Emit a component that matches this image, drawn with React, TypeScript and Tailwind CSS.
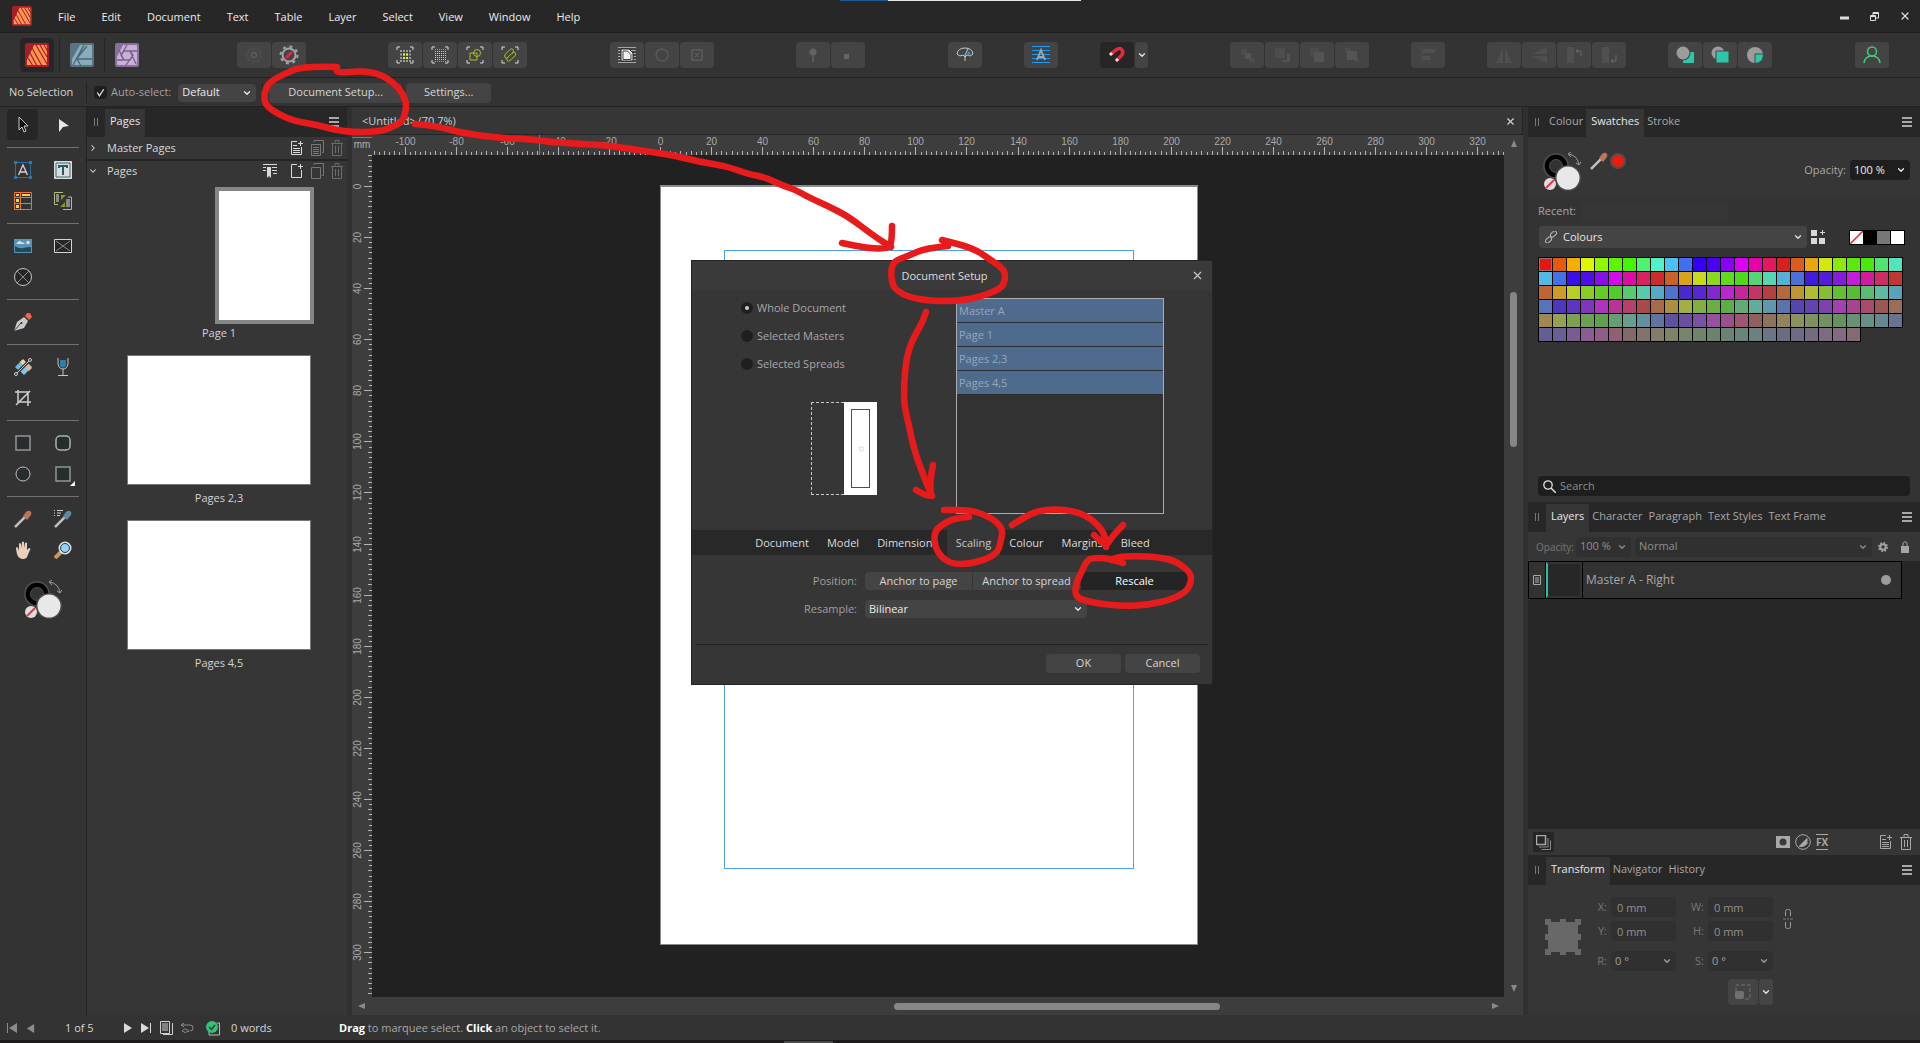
import type { ReactNode } from "react";
import { ChevronDown, ChevronRight, X } from "lucide-react";

const MENUS = ["File", "Edit", "Document", "Text", "Table", "Layer", "Select", "View", "Window", "Help"];
const DIALOG_TABS = ["Document", "Model", "Dimensions", "Scaling", "Colour", "Margins", "Bleed"];
const SCOPES = ["Whole Document", "Selected Masters", "Selected Spreads"];
const SPREADS = ["Master A", "Page 1", "Pages 2,3", "Pages 4,5"];
const MM = 2.554;

type Point = [number, number];

// vivid hues fade to their greyed versions over nine cycles
const VIVID = [
  "e21814", "e55a12", "f7ae00", "ddf700", "8ff700", "5af700", "44f700", "4cf36f", "50f2c7",
  "4cc1f2", "4070f2", "3300f7", "4a00f7", "8b00f7", "dd00f7", "e800aa", "e5185e",
];
const MUTED = [
  "836a6a", "81756b", "817d6a", "7f836a", "7a836b", "72836b", "6b836c", "6a8374", "6a837d",
  "6a8083", "6b7583", "6b6d83", "706b83", "766a83", "7d6a83", "836a80", "836a75",
];

function mix(a: string, b: string, t: number) {
  const channel = (hex: string, i: number) => parseInt(hex.slice(i * 2, i * 2 + 2), 16);
  const rgb = [0, 1, 2].map((i) => Math.round(channel(a, i) * (1 - t) + channel(b, i) * t));
  return `rgb(${rgb.join(",")})`;
}

const SWATCHES = Array.from({ length: 153 }, (_, i) => mix(VIVID[i % 17], MUTED[i % 17], Math.floor(i / 17) / 8));

const MARKS: Point[][] = [
  [[337, 67], [304, 66], [286, 73], [269, 82], [264, 93], [265, 105], [278, 114], [294, 121], [318, 125], [343, 132], [380, 132], [394, 126], [402, 122], [407, 108], [404, 95], [394, 83], [380, 74], [363, 71], [336, 73], [337, 67]],
  [[415, 124], [437, 126], [462, 133], [498, 138], [528, 139], [551, 142], [580, 144], [604, 145], [652, 152], [677, 156], [700, 162], [726, 166], [748, 174], [764, 177], [784, 186], [796, 190], [808, 197], [830, 207], [849, 217], [874, 236], [891, 247]],
  [[892, 226], [892, 240], [889, 249], [866, 248], [842, 243]],
  [[948, 246], [926, 248], [908, 256], [894, 261], [891, 270], [892, 283], [896, 290], [908, 297], [930, 301], [958, 301], [980, 297], [1000, 289], [1005, 282], [1005, 270], [991, 260], [973, 248], [942, 240]],
  [[926, 312], [923, 322], [912, 340], [906, 360], [904, 385], [904, 405], [909, 425], [914, 450], [926, 482], [932, 496]],
  [[933, 465], [930, 480], [931, 496], [925, 495], [916, 490]],
  [[969, 517], [955, 518], [941, 525], [934, 533], [935, 547], [942, 558], [953, 564], [969, 564], [987, 559], [998, 552], [1001, 540], [1003, 530], [996, 521], [983, 514], [969, 510], [944, 510]],
  [[1012, 525], [1023, 518], [1037, 511], [1055, 509], [1073, 511], [1087, 516], [1098, 525], [1105, 535], [1106, 547]],
  [[1094, 535], [1106, 547], [1111, 538], [1123, 525]],
  [[1123, 563], [1108, 558], [1091, 558], [1086, 562], [1082, 571], [1076, 583], [1075, 595], [1082, 600], [1101, 604], [1123, 606], [1148, 605], [1173, 599], [1187, 591], [1191, 582], [1191, 573], [1176, 561], [1158, 557], [1134, 556], [1118, 557], [1112, 560]],
];

function smooth(points: Point[]) {
  let d = `M${points[0]}`;
  for (let i = 1; i < points.length - 1; i++) {
    const [x, y] = points[i];
    const [nx, ny] = points[i + 1];
    d += ` Q${x},${y} ${(x + nx) / 2},${(y + ny) / 2}`;
  }
  return `${d} L${points[points.length - 1]}`;
}

function Annotations() {
  return (
    <svg width="1920" height="1043" className="pointer-events-none absolute left-0 top-0 z-20" aria-hidden="true">
      {MARKS.map((mark, i) => (
        <path key={i} d={smooth(mark)} fill="none" stroke="#e71b1b" strokeWidth="6.5" strokeLinecap="round" strokeLinejoin="round" />
      ))}
    </svg>
  );
}

function Icon({ children, size = 18, box = 18 }: { children: ReactNode; size?: number; box?: number }) {
  return (
    <svg width={size} height={size} viewBox={`0 0 ${box} ${box}`} fill="none" className="shrink-0" aria-hidden="true">
      {children}
    </svg>
  );
}

function PublisherLogo({ size }: { size: number }) {
  return (
    <Icon size={size} box={24}>
      <rect width="24" height="24" rx="2" fill="#a51e2c" />
      <path d="M9 2h12q1 0 1 1v18q0 1-1 1H2v-5z" fill="#ff9550" />
      <path d="M5 10l7 13M7 5l10 18M11 2l11 19M15 2l7 12M19 2l4 7M3 15l5 8" stroke="#a51e2c" strokeWidth="1.2" />
    </Icon>
  );
}

function DesignerLogo() {
  return (
    <Icon size={24} box={24}>
      <rect width="24" height="24" rx="2" fill="#5a7485" />
      <path d="M10 2h11q1 0 1 1v18q0 1-1 1H2v-6z" fill="#88aebb" />
      <path d="M14 2L7 16h15M7 16l4 7M14 2L3 22M8 14l9-11" stroke="#4c6677" strokeWidth="1.3" />
    </Icon>
  );
}

function PhotoLogo() {
  return (
    <Icon size={24} box={24}>
      <rect width="24" height="24" rx="2" fill="#85719a" />
      <path d="M8 2h13q1 0 1 1v18q0 1-1 1H3q-1 0-1-1v-7z" fill="#cdaed6" />
      <path d="M9 8h13M15 8l6 13M18 12l-7 10M15 17H2M9 17L4 7M6 12l6-10M9 8h6l3 4-3 5H9l-3-5z" stroke="#75618c" strokeWidth="1.3" />
    </Icon>
  );
}

function GearIcon({ dim }: { dim?: boolean }) {
  return (
    <Icon size={20} box={20}>
      <circle cx="10" cy="10" r="6.5" stroke={dim ? "#4c4c4c" : "#a4a4a4"} strokeWidth="2" />
      <circle cx="10" cy="10" r="8.5" stroke={dim ? "#4a4a4a" : "#a4a4a4"} strokeWidth="2" strokeDasharray="3 3.7" />
      {dim ? <circle cx="10" cy="10" r="2.5" stroke="#585858" strokeWidth="2" /> : <path d="M7 13l6-6" stroke="#e8263f" strokeWidth="2.5" />}
    </Icon>
  );
}

function Corners() {
  return <path d="M1 4V1h3M14 1h3v3M17 14v3h-3M4 17H1v-3" stroke="#dcdcdc" />;
}

function ToolButton({ label, children, dark }: { label: string; children: ReactNode; dark?: boolean }) {
  return (
    <button
      aria-label={label}
      className={`flex h-[26px] w-[34px] shrink-0 items-center justify-center rounded-sm ${dark ? "bg-[#262626]" : "bg-[#444444]"}`}
    >
      {children}
    </button>
  );
}

function Caret() {
  return <ChevronDown size={10} strokeWidth={3} className="pointer-events-none absolute right-1 top-1/2 -translate-y-1/2" />;
}

function Select({ label, value, className }: { label: string; value: string; className: string }) {
  return (
    <span className={`relative inline-flex shrink-0 items-center rounded-sm ${className}`}>
      <select aria-label={label} className="h-full w-full appearance-none bg-transparent pl-1 outline-none">
        <option>{value}</option>
      </select>
      <Caret />
    </span>
  );
}

function Toolbar() {
  return (
    <div className="flex h-[45px] items-center border-b border-[#222222] bg-[#333333]">
      <div className="flex items-center pl-5">
        <button aria-label="Publisher persona" className="flex h-[34px] w-[34px] items-center justify-center rounded bg-[#262626]">
          <PublisherLogo size={24} />
        </button>
        <button aria-label="Designer persona" className="ml-[5px] flex h-[34px] w-[45px] items-center justify-center border-l border-[#262626]">
          <DesignerLogo />
        </button>
        <button aria-label="Photo persona" className="flex h-[34px] w-[45px] items-center justify-center border-l border-[#262626]">
          <PhotoLogo />
        </button>
      </div>
      <div className="ml-[88px] flex gap-px">
        <ToolButton label="Preferences"><GearIcon dim /></ToolButton>
        <ToolButton label="Preflight"><GearIcon /></ToolButton>
      </div>
      <div className="ml-[82px] flex gap-px">
        <ToolButton label="Baseline grid">
          <Icon>
            <Corners />
            <path d="M4 5h11M4 8.500h11M4 12h11M4 15h11" stroke="#9a9a9a" strokeWidth="2" strokeDasharray="2 1" />
            <path d="M7 8.500h5M7 12h5" stroke="#e6f23c" strokeWidth="2" strokeDasharray="2 1" />
          </Icon>
        </ToolButton>
        <ToolButton label="Grid">
          <Icon>
            <Corners />
            <path d="M4 3.500h11M4 15.500h11" stroke="#9a9a9a" strokeDasharray="1 1" />
            <path d="M4 5.500h11M4 7.500h11M4 9.500h11M4 11.500h11M4 13.500h11" stroke="#d9e23c" strokeDasharray="1 1" />
          </Icon>
        </ToolButton>
        <ToolButton label="Snap to shapes">
          <Icon>
            <Corners />
            <path d="M4 7h7v7H4z" stroke="#aebb2b" />
            <circle cx="11" cy="7" r="3.500" stroke="#aebb2b" />
          </Icon>
        </ToolButton>
        <ToolButton label="Snap to curves">
          <Icon>
            <Corners />
            <path d="M4.500 12q-2-2 0-4L9 3.500q2-1.500 3 0t0 3L7 11M6 14.500q1.500 1.500 3 0L14 10q1.500-2 0-3.500M4.500 12q1.500 1 2.500-1M6 14.500q-1-1.500 1-3.500M14 6.500q-1.500-1-3 1" stroke="#aebb2b" />
          </Icon>
        </ToolButton>
      </div>
      <div className="ml-[83px] flex gap-px">
        <ToolButton label="Wrap">
          <Icon>
            <path d="M0 1.500h18M0 4.500h18M0 7.500h18M0 10.500h18M0 13.500h18M0 16.500h18" stroke="#a5a5a5" />
            <path d="M3 3h8l4 4v8H3z" fill="#efefef" stroke="#222" />
            <path d="M5 5h4.500l3.500 3.500V13.500H5z" stroke="#444" />
          </Icon>
        </ToolButton>
        <ToolButton label="Wrap outline"><Icon><circle cx="9" cy="9" r="6" stroke="#585858" strokeWidth="1.500" /></Icon></ToolButton>
        <ToolButton label="Wrap frame"><Icon><path d="M4 4h10v10H4zM7 7l4 4M11 7l-4 4" stroke="#5c5c5c" strokeWidth="1.500" /></Icon></ToolButton>
      </div>
      <div className="ml-[82px] flex gap-px">
        <ToolButton label="Pin"><Icon><circle cx="9" cy="6" r="3.500" fill="#626262" /><path d="M9 8v8" stroke="#626262" strokeWidth="1.500" /></Icon></ToolButton>
        <ToolButton label="Anchor"><Icon><path d="M5 8h5v5H5z" fill="#666" /></Icon></ToolButton>
      </div>
      <div className="ml-[83px] flex">
        <ToolButton label="Preview">
          <Icon>
            <path d="M1 8q1-6 8-6 7 0 8 6l-3 2-3-1-2 2-2-2-3 1zM9 15V9l3-6" stroke="#c9c9c9" />
            <path d="M12 5l3 2-3 3-1-1z" fill="#2a8fdd" />
          </Icon>
        </ToolButton>
      </div>
      <div className="ml-[42px] flex">
        <ToolButton label="Baseline">
          <Icon>
            <path d="M0 .5h18M0 4.500h18M0 8.500h18M0 12.500h18M0 16.500h18" stroke="#1d9bf0" />
            <path d="M5 14L9 4l4 10M7 11h4" stroke="#a5a5a5" strokeWidth="1.800" />
          </Icon>
        </ToolButton>
      </div>
      <div className="ml-[42px] flex gap-px">
        <ToolButton label="Snapping" dark>
          <Icon>
            <path d="M3 8l5-4q4-3 6 0t-1 6l-4 4" stroke="#e52a3d" strokeWidth="3.500" />
            <path d="M2 9l2-2M8 15l2-2" stroke="#eee" strokeWidth="3" />
          </Icon>
        </ToolButton>
        <button aria-label="Snapping options" className="flex h-[26px] w-[13px] items-center justify-center rounded-sm bg-[#444444] text-gray-200">
          <ChevronDown size={10} strokeWidth={3} />
        </button>
      </div>
      <div className="ml-[82px] flex gap-px">
        <ToolButton label="Move to back"><Icon><path d="M3 3h6v6H3zM11 12h5v4h-5z" fill="#4d4d4d" /><path d="M7 7h6v6H7z" fill="#545454" /></Icon></ToolButton>
        <ToolButton label="Move back"><Icon><path d="M2 2h10v10H2z" fill="#4d4d4d" /><path d="M14 8h3v8H9v-2h5z" fill="#545454" /></Icon></ToolButton>
        <ToolButton label="Move forward"><Icon><path d="M2 2h9v9H2z" fill="#4b4b4b" /><path d="M6 6h10v10H6z" fill="#545454" /></Icon></ToolButton>
        <ToolButton label="Move to front"><Icon><path d="M2 2h5v5H2zM11 12h5v4h-5z" fill="#4b4b4b" /><path d="M4 5h10v9H4z" fill="#545454" /></Icon></ToolButton>
      </div>
      <div className="ml-[42px] flex">
        <ToolButton label="Alignment"><Icon><path d="M3 1v16" stroke="#505050" /><path d="M4 5h12M4 12h7" stroke="#505050" strokeWidth="4" /></Icon></ToolButton>
      </div>
      <div className="ml-[42px] flex gap-px">
        <ToolButton label="Flip horizontal"><Icon><path d="M8 1v16H1zM10 1v16h7z" fill="#4f4f4f" /></Icon></ToolButton>
        <ToolButton label="Flip vertical"><Icon><path d="M17 1v7H2zM17 17v-7H2z" fill="#4f4f4f" /></Icon></ToolButton>
        <ToolButton label="Rotate left"><Icon><path d="M2 1h7v16H2z" fill="#505050" /><path d="M16 10V5h-5M13 3l-2 2 2 2" stroke="#686868" /></Icon></ToolButton>
        <ToolButton label="Rotate right"><Icon><path d="M2 1h7v16H2z" fill="#505050" /><path d="M16 9v6h-5M13 13l-2 2 2 2" stroke="#686868" /></Icon></ToolButton>
      </div>
      <div className="ml-[42px] flex gap-px">
        <ToolButton label="Insert behind"><Icon><path d="M7 6h11v11H7z" fill="#2bc8a9" /><circle cx="7" cy="7" r="7.500" fill="#444" /><circle cx="7" cy="7" r="6.500" fill="#9c9c9c" /></Icon></ToolButton>
        <ToolButton label="Insert on top"><Icon><circle cx="7" cy="7" r="6.500" fill="#9c9c9c" /><path d="M5 5h13v12H5z" fill="#2bc8a9" stroke="#444" /></Icon></ToolButton>
        <ToolButton label="Insert inside"><Icon><circle cx="9" cy="9" r="8" fill="#9c9c9c" /><path d="M9 8h8.500q0 9-8.500 9.500z" fill="#2bc8a9" stroke="#444" /></Icon></ToolButton>
      </div>
      <div className="ml-auto mr-[31px] flex">
        <ToolButton label="Account"><Icon><circle cx="9" cy="5.500" r="4.500" stroke="#43c97a" strokeWidth="1.500" /><path d="M1 17q1-7 8-7 7 0 8 7" stroke="#43c97a" strokeWidth="1.500" /></Icon></ToolButton>
      </div>
    </div>
  );
}

function ContextBar() {
  return (
    <div className="flex h-[29px] items-center border-b border-[#222222] bg-[#333333] pt-px">
      <span className="w-[86px] pl-[9px] text-[#d6d6d6]">No Selection</span>
      <label className="flex h-5 items-center gap-1 border-l border-[#242424] pl-[7px] text-[#a2a2a2]">
        <span className="relative flex">
          <input type="checkbox" defaultChecked className="peer h-[13px] w-[13px] appearance-none rounded-sm bg-[#1f1f1f]" />
          <svg viewBox="0 0 12 12" className="pointer-events-none absolute inset-0 hidden peer-checked:block" fill="none">
            <path d="M3 6l2 3 4-6" stroke="#e3e3e3" strokeWidth="1.200" />
          </svg>
        </span>
        Auto-select:
      </label>
      <Select label="Auto-select" value="Default" className="ml-[7px] h-[18px] w-[78px] bg-[#444444] text-[#ececec]" />
      <div className="ml-[6px] flex h-5 gap-1 border-l border-[#242424] pl-[6px]">
        <button className="w-[133px] rounded-sm bg-[#444444] text-center text-[#d6d6d6]">Document Setup...</button>
        <button className="w-[85px] rounded-sm bg-[#444444] text-center text-[#d6d6d6]">Settings...</button>
      </div>
    </div>
  );
}

const dropper = (tip: string) => (
  <>
    <path d="M2 16L11 7" stroke="#2a2a2a" strokeWidth="4" />
    <path d="M1 17L11 7" stroke="#bdbdbd" strokeWidth="2.500" />
    <path d="M9 6l4 4 4-5q1-3-1-4t-4 1z" fill={tip} />
  </>
);

const TOOLS: { name: string; icon: ReactNode }[][][] = [
  [
    [
      { name: "Move", icon: <path d="M5 1v13l3-3 2 5 2-1-2-5h4z" fill="#0d0d0d" stroke="#c9c9c9" /> },
      { name: "Node", icon: <path d="M5 3v13l4-5 6-1z" fill="#e6e6e6" /> },
    ],
  ],
  [
    [
      {
        name: "Artistic Text",
        icon: (
          <>
            <path d="M1.500 1.500h15v15h-15z" stroke="#2a6f9e" />
            <path d="M0 0h3v3H0zM15 0h3v3h-3zM0 15h3v3H0zM15 15h3v3h-3z" fill="#2d78aa" />
            <path d="M4.500 14L9 4l4.500 10M6 11h6" stroke="#d6d6d6" strokeWidth="1.300" />
          </>
        ),
      },
      {
        name: "Frame Text",
        icon: (
          <>
            <path d="M.5.500h17v17H.5z" fill="#ddd" stroke="#ddd" />
            <path d="M2 2h14v14H2z" stroke="#2d6a7a" />
            <path d="M4 5h10M9 5v9M5 4v3M13 4v3" stroke="#275968" strokeWidth="2" />
          </>
        ),
      },
    ],
    [
      {
        name: "Table",
        icon: (
          <>
            <path d="M.5.500h17v17H.5zM6.500.500v17M.5 5.500h17M.5 11.500h17" stroke="#e8742e" />
            <path d="M2 2h3v2H2zM8 2h8v2H8zM2 7h3v3H2zM2 13h3v3H2z" fill="#f4d04e" />
          </>
        ),
      },
      {
        name: "Data Merge",
        icon: (
          <>
            <path d="M9 .5H.5v12H4M9 17.500h8.500V5H14" stroke="#b5bd7b" />
            <path d="M2 3h3M2 5h3M2 7h3M2 9h3M12 8h4M12 10h4M12 12h4M12 14h4" stroke="#ddd" />
            <path d="M7 3h5l-5 5zM11 10v5H6z" fill="#8a9a20" />
          </>
        ),
      },
    ],
  ],
  [
    [
      {
        name: "Place Image",
        icon: (
          <>
            <path d="M0 2h18v14H0z" fill="#5894b8" />
            <path d="M1 9q4 3 8 2t8-1v5H1z" fill="#1f4a5c" />
            <path d="M2 7q1-1 3-3 1-1 2 1 3 0 4 2z" fill="#dcdcdc" />
            <circle cx="14" cy="5.500" r="1.800" fill="#dcdcdc" />
          </>
        ),
      },
      { name: "Picture Frame", icon: <><path d="M.5 2.500h17v13H.5z" fill="#262626" stroke="#d5d5d5" /><path d="M2 4l14 10M16 4L2 14" stroke="#8a8a8a" /></> },
    ],
    [{ name: "Ellipse Frame", icon: <><circle cx="9" cy="9" r="8.500" fill="#262626" stroke="#c5c5c5" /><path d="M3 3l12 12M15 3L3 15" stroke="#8a8a8a" /></> }],
  ],
  [
    [
      {
        name: "Pen",
        icon: (
          <>
            <path d="M0 18l3-9 7-5 4 4-4 7z" fill="#c9c9c9" />
            <path d="M0 18l7-8" stroke="#444" />
            <circle cx="7.500" cy="10" r="1" fill="#333" />
            <path d="M11 3l4 4 3-3-2-4h-3z" fill="#f4604a" />
          </>
        ),
      },
    ],
  ],
  [
    [
      {
        name: "Fill",
        icon: (
          <>
            <path d="M1 9l7-7 4 4-7 7z" fill="#6fb6e0" />
            <path d="M6 4l3-3 4 4-3 3z" fill="#ecd39a" />
            <path d="M6 13l8-8 4 4-8 8z" fill="#86c3ea" />
            <path d="M11 9l3-3 4 4-3 3z" fill="#e5b596" />
            <path d="M3 15L15 3" stroke="#333" strokeWidth="3" />
            <path d="M3 15L15 3" stroke="#ccc" />
            <circle cx="2" cy="16" r="1.500" fill="#333" stroke="#ccc" />
            <circle cx="16" cy="2" r="1.500" fill="#333" stroke="#ccc" />
          </>
        ),
      },
      {
        name: "Transparency",
        icon: (
          <>
            <path d="M6 2h6v6q-3 3-6 0z" fill="#2f7fae" />
            <path d="M4 0v6q1 5 5 5t5-5V0M9 11v6M4 17.500h10" stroke="#c5c5c5" />
          </>
        ),
      },
    ],
    [{ name: "Crop", icon: <path d="M4 1v12h13M1 3h13v14M2 16L16 2" stroke="#cfcfcf" strokeWidth="1.500" /> }],
  ],
  [
    [
      { name: "Rectangle", icon: <path d="M2 2h14v14H2z" fill="#252d2f" stroke="#959595" strokeWidth="1.500" /> },
      { name: "Rounded Rectangle", icon: <rect x="2" y="2" width="14" height="14" rx="4" fill="#252d2f" stroke="#b0b0b0" strokeWidth="1.500" /> },
    ],
    [
      { name: "Ellipse", icon: <circle cx="9" cy="9" r="7" fill="#252d2f" stroke="#c0c0c0" /> },
      {
        name: "Shapes",
        icon: (
          <>
            <path d="M2 2h14v14H2z" fill="#252d2f" stroke="#959595" strokeWidth="1.500" />
            <path d="M21 16v5h-5z" fill="#fff" />
          </>
        ),
      },
    ],
  ],
  [
    [
      { name: "Colour Picker", icon: dropper("#b9765a") },
      { name: "Style Picker", icon: <>{dropper("#5f88a5")}<path d="M0 .5h1M3 .5h6M0 3h1M3 3h4M0 5.500h1M3 5.500h3" stroke="#ccc" /></> },
    ],
    [
      { name: "View", icon: <path d="M2 8q0-2 1-2t2 4V3q1-2 2 0l.5 4L8 1q1-1 2 0v6l1-5q2-1 2 0v7l2-2q2 0 1 2l-3 7q-1 2-5 2-4-1-5-5z" fill="#ead0bb" /> },
      {
        name: "Zoom",
        icon: (
          <>
            <path d="M1 17l6-6" stroke="#c99765" strokeWidth="4" />
            <circle cx="11" cy="7" r="5.500" fill="#8fd3fa" stroke="#dfe3e5" strokeWidth="2" />
            <circle cx="11" cy="7" r="4.500" stroke="#2c3a42" />
          </>
        ),
      },
    ],
  ],
];

function ColourWells() {
  return (
    <svg width="40" height="42" viewBox="0 0 40 42" fill="none" className="shrink-0" aria-hidden="true">
      <circle cx="14" cy="15" r="13" fill="#4b4b4b" />
      <circle cx="14" cy="15" r="9" fill="#333" stroke="#000" strokeWidth="4.500" />
      <circle cx="14" cy="15" r="6.500" stroke="#4b4b4b" />
      <circle cx="26" cy="27" r="13" fill="#4b4b4b" />
      <circle cx="26" cy="27" r="11.500" fill="#e8e8e8" />
      <circle cx="8" cy="33" r="6" fill="#dedede" />
      <path d="M4 37l8-8" stroke="#e5354a" strokeWidth="2" />
      <path d="M27 3q9 2 10 11M29 1l-3 2 3 3M34 12l3 2 2-3" stroke="#999" />
    </svg>
  );
}

function Tools() {
  return (
    <aside className="w-[87px] shrink-0 border-r border-[#222222] bg-[#333333]">
      {TOOLS.map((rows, i) => (
        <div key={i} className={`mx-[7px] pb-[7px] ${i === 0 ? "pt-[2px]" : "border-t border-[#707070] pt-[6px]"}`}>
          {rows.map((tools, j) => (
            <div key={j} className="flex h-[31px] gap-[9px]">
              {tools.map((tool) => (
                <button
                  key={tool.name}
                  aria-label={tool.name}
                  className={`flex h-[31px] w-[31px] items-center justify-center rounded ${tool.name === "Move" ? "bg-[#262626]" : ""} ${tool.name === "Shapes" ? "[&>svg]:overflow-visible" : ""}`}
                >
                  <Icon>{tool.icon}</Icon>
                </button>
              ))}
            </div>
          ))}
        </div>
      ))}
      <div className="pl-[23px] pt-[7px]">
        <ColourWells />
      </div>
    </aside>
  );
}

function Grip() {
  return <span className="mx-[7px] h-2 w-[4px] border-x border-[#777777]" />;
}

function PanelMenu() {
  return (
    <button aria-label="Panel menu" className="ml-auto mr-2">
      <Icon size={10} box={10}><path d="M0 1h10M0 5h10M0 9h10" stroke="#a8a8a8" strokeWidth="2" /></Icon>
    </button>
  );
}

function PanelTabs({ tabs, active }: { tabs: string[]; active: string }) {
  return (
    <div className="flex h-[30px] shrink-0 items-center bg-[#272727]">
      <Grip />
      {tabs.map((tab) => (
        <button
          key={tab}
          className={`mt-[2px] h-7 pb-[3px] text-center ${tab === active ? "bg-[#363636] px-[5px] text-[#e8e8e8]" : "px-[3px] text-[#a8a8a8]"}`}
        >
          {tab}
        </button>
      ))}
      <PanelMenu />
    </div>
  );
}

function TrashIcon({ stroke = "#6b6b6b" }: { stroke?: string }) {
  return (
    <svg width="12" height="16" viewBox="0 0 12 16" fill="none" aria-hidden="true">
      <path d="M0 3.500h12M4 3V.5h4V3M1.500 3v12.500h9V3M4.500 6v7M7.500 6v7" stroke={stroke} />
    </svg>
  );
}

function SheetIcon({ stroke, lines, plus, stack }: { stroke: string; lines?: boolean; plus?: boolean; stack?: boolean }) {
  return (
    <svg width="13" height="16" viewBox="0 0 13 16" fill="none" aria-hidden="true">
      {plus && <path d="M6 1.500H.5v13h10V7M7 3.500h5M9.500 1v5" stroke={stroke} />}
      {stack && <path d="M.5 4.500h9v11h-9zM3 2V.5h9.500v12H11" stroke={stroke} />}
      {lines && <path d={plus ? "M2 5.500h4M2 8.500h7M2 10.500h7M2 12.500h7" : "M2 7.500h6M2 9.500h6M2 11.500h6M2 13.500h6"} stroke={stroke} />}
    </svg>
  );
}

function PagesPanel() {
  return (
    <aside className="w-[260px] shrink-0 bg-[#363636]">
      <PanelTabs tabs={["Pages"]} active="Pages" />
      <div className="flex h-[22px] items-center pl-px pr-1 text-[#dadada]">
        <ChevronRight size={10} strokeWidth={2.500} />
        <span className="ml-[9px]">Master Pages</span>
        <span className="ml-auto flex gap-[7px]">
          <SheetIcon stroke="#dadada" lines plus />
          <SheetIcon stroke="#777" lines stack />
          <TrashIcon />
        </span>
      </div>
      <div className="flex h-[22px] items-center border-t-2 border-[#242424] pl-px pr-1 text-[#dadada]">
        <ChevronDown size={10} strokeWidth={2.500} />
        <span className="ml-[9px]">Pages</span>
        <span className="ml-auto flex gap-[7px]">
          <svg width="14" height="14" viewBox="0 0 14 14" fill="none" className="mr-[7px] mt-px" aria-hidden="true">
            <path d="M0 .5h14M0 3.500h3M9 3.500h5M0 6.500h3M9 6.500h5M10 9.500h4" stroke="#dadada" />
            <path d="M4 3h4v11l-2-2-2 2z" fill="#dadada" />
          </svg>
          <SheetIcon stroke="#dadada" plus />
          <SheetIcon stroke="#777" stack />
          <TrashIcon />
        </span>
      </div>
      <div className="flex flex-col items-center pl-1 pt-[6px] text-[#d4d4d4]">
        <div className="ml-[91px] h-[137px] w-[99px] border-4 border-[#868686] bg-white" />
        <p className="mb-[14px] leading-[17px]">Page 1</p>
        <div className="h-[130px] w-[184px] border border-[#777777] bg-white" />
        <p className="mb-[14px] mt-1 leading-[17px]">Pages 2,3</p>
        <div className="h-[130px] w-[184px] border border-[#777777] bg-white" />
        <p className="mt-1 leading-[17px]">Pages 4,5</p>
      </div>
    </aside>
  );
}

function range(from: number, to: number, step: number) {
  return Array.from({ length: Math.floor((to - from) / step) + 1 }, (_, i) => from + i * step);
}

// the zero mark sits where the page starts on the pasteboard
function TopRuler() {
  const at = (mm: number) => Math.round(288 + mm * MM) + 0.5;
  return (
    <svg width="100%" height="20" className="block font-['Liberation_Sans',sans-serif]" aria-hidden="true">
      {range(-112, 330, 2).map((mm) => (
        <path key={mm} d={`M${at(mm)} 20V${mm % 20 === 0 ? 12 : mm % 4 === 0 ? 16 : 17}`} stroke="#b5b5b5" />
      ))}
      {range(-100, 320, 20).map((mm) => (
        <text key={mm} x={at(mm)} y="10" fontSize="10" fill="#a9a9a9" textAnchor="middle">{mm}</text>
      ))}
      <path d="M167.500 0v20" stroke="#2196e8" />
    </svg>
  );
}

function SideRuler() {
  const at = (mm: number) => Math.round(31 + mm * MM) + 0.5;
  return (
    <svg width="20" height="100%" className="absolute inset-0 font-['Liberation_Sans',sans-serif]" aria-hidden="true">
      {range(-12, 316, 2).map((mm) => (
        <path key={mm} d={`M20 ${at(mm)}H${mm % 20 === 0 ? 12 : mm % 4 === 0 ? 16 : 17}`} stroke="#b5b5b5" />
      ))}
      {range(0, 300, 20).map((mm) => (
        <text key={mm} transform={`translate(9 ${at(mm)}) rotate(-90)`} fontSize="10" fill="#a9a9a9" textAnchor="middle">{mm}</text>
      ))}
    </svg>
  );
}

function Canvas() {
  return (
    <main className="flex min-w-0 flex-1 flex-col border-l-[5px] border-[#303030] bg-[#3d3d3d]">
      <div className="flex h-[28px] shrink-0 items-center border-b border-r border-[#242424] bg-[#363636] pl-[10px] pr-[6px] pt-px text-[#d0d0d0]">
        <span>&lt;Untitled&gt; (70.7%)</span>
        <button aria-label="Close document" className="ml-auto"><X size={11} strokeWidth={2.500} /></button>
      </div>
      <div className="flex min-h-0 flex-1">
        <div className="flex w-5 shrink-0 flex-col">
          <div className="flex h-5 flex-col pt-[2px]">
            <div className="border-t border-[#2b8fdc] text-center font-['Liberation_Sans',sans-serif] text-[10px] leading-[14px] text-[#b0b0b0]">mm</div>
          </div>
          <div className="relative flex-1"><SideRuler /></div>
        </div>
        <div className="flex min-w-0 flex-1 flex-col">
          <div className="h-5 shrink-0 overflow-hidden"><TopRuler /></div>
          <div className="relative flex-1 overflow-hidden bg-[#212121]">
            <div className="absolute left-[288px] top-[30px] h-[760px] w-[538px] border border-t-2 border-[#8b8b8b] bg-white">
              <div className="absolute left-[63px] top-[63px] h-[619px] w-[410px] border border-[#4ba3e3]" />
            </div>
          </div>
        </div>
        <div className="flex w-[19px] shrink-0 flex-col items-center py-1 text-[#8a8a8a]">
          <Icon size={8} box={8}><path d="M1 8h6L4 1z" fill="currentColor" /></Icon>
          <div className="mt-[145px] h-[155px] w-[7px] rounded-full bg-[#868686]" />
          <div className="mt-auto"><Icon size={8} box={8}><path d="M1 0h6L4 7z" fill="currentColor" /></Icon></div>
        </div>
      </div>
      <div className="flex h-[18px] shrink-0 items-center pl-[5px] pr-[23px] text-[#8a8a8a]">
        <Icon size={8} box={8}><path d="M8 1v6L1 4z" fill="currentColor" /></Icon>
        <div className="ml-[529px] h-[7px] w-[326px] rounded-full bg-[#868686]" />
        <div className="ml-auto"><Icon size={8} box={8}><path d="M0 1v6l7-3z" fill="currentColor" /></Icon></div>
      </div>
    </main>
  );
}

function SwatchesPanel() {
  return (
    <section className="flex h-[395px] shrink-0 flex-col">
      <PanelTabs tabs={["Colour", "Swatches", "Stroke"]} active="Swatches" />
      <div className="flex h-[60px] shrink-0 bg-[#363636] pl-[14px] pr-[10px]">
        <div className="pt-[14px]"><ColourWells /></div>
        <div className="ml-2 flex gap-[2px] pt-[15px]">
          <Icon>{dropper("#b9765a")}</Icon>
          <span className="mt-px h-4 w-4 rounded-full border-2 border-[#4f4f4f] bg-[#f01a0c]" />
        </div>
        <div className="ml-auto mt-[23px] flex h-5 items-center gap-1 text-[#a8a8a8]">
          Opacity:
          <Select label="Opacity" value="100 %" className="h-5 w-[60px] bg-[#1e1e1e] text-[#ededed]" />
        </div>
      </div>
      <div className="flex h-[29px] shrink-0 items-center gap-[6px] pl-[10px] text-[#a8a8a8]">
        Recent:
        <span className="h-4 w-[146px] bg-[#363636]" />
      </div>
      <div className="flex shrink-0 items-center pl-[11px] pr-[15px]">
        <span className="relative flex h-[22px] w-[268px] items-center rounded-sm bg-[#444444] text-[#e5e5e5]">
          <span className="absolute left-[6px]">
            <Icon size={12} box={12}>
              <rect x="5" y="1" width="7" height="4" rx="2" transform="rotate(-45 8.500 3)" stroke="#bbb" />
              <rect x="0" y="7" width="7" height="4" rx="2" transform="rotate(-45 3.500 9)" stroke="#bbb" />
            </Icon>
          </span>
          <select aria-label="Palette" className="h-full w-full appearance-none bg-transparent pl-[24px] pt-px outline-none">
            <option>Colours</option>
          </select>
          <Caret />
        </span>
        <button aria-label="Add palette" className="ml-1">
          <Icon size={14} box={14}><path d="M0 0h6v6H0zM0 8h6v6H0zM8 8h6v6H8z" fill="#d8d8d8" /><path d="M9 2.500h5M11.500 0v5" stroke="#d8d8d8" /></Icon>
        </button>
        <div className="ml-auto flex border border-black">
          <Icon size={13} box={13}><path d="M0 0h13v13H0z" fill="#fff" /><path d="M0 13L13 0" stroke="#e0202a" strokeWidth="1.500" /></Icon>
          <span className="h-[13px] w-[14px] bg-black" />
          <span className="h-[13px] w-[14px] border-r border-black bg-[#777777]" />
          <span className="h-[13px] w-[13px] bg-white" />
        </div>
      </div>
      <div className="mt-[10px] flex w-[376px] shrink-0 flex-wrap pl-[11px]">
        {SWATCHES.map((colour, i) => (
          <button
            key={i}
            aria-label={`Swatch ${i + 1}`}
            className="-ml-px -mt-px h-[15px] w-[15px] border border-black"
            style={{ backgroundColor: colour }}
          >
            {i === 0 && <span className="block h-[13px] w-[13px] border border-[#a56a6a]" />}
          </button>
        ))}
      </div>
      <label className="mb-[6px] ml-[10px] mr-[10px] mt-auto flex h-5 shrink-0 items-center gap-1 rounded-sm bg-[#1e1e1e] pl-[5px]">
        <Icon size={13} box={13}><circle cx="5" cy="5" r="4.200" stroke="#ddd" strokeWidth="1.300" /><path d="M8 8l5 5" stroke="#ddd" strokeWidth="1.500" /></Icon>
        <input type="search" aria-label="Search swatches" placeholder="Search" className="w-full bg-transparent pt-px outline-none placeholder:text-[#8c8c8c]" />
      </label>
    </section>
  );
}

function LayersPanel() {
  return (
    <section className="flex min-h-0 flex-1 flex-col bg-[#272727]">
      <PanelTabs tabs={["Layers", "Character", "Paragraph", "Text Styles", "Text Frame"]} active="Layers" />
      <div className="flex h-[29px] shrink-0 items-center bg-[#363636] pl-2 pr-[11px] text-[#8f8f8f]">
        <span className="w-10 pt-[2px] text-[10px] text-[#777777]">Opacity:</span>
        <Select label="Layer opacity" value="100 %" className="h-5 w-[55px] bg-[#303030]" />
        <Select label="Blend mode" value="Normal" className="ml-1 h-5 w-[237px] bg-[#303030]" />
        <button aria-label="Layer settings" className="ml-[6px]">
          <Icon size={10} box={10}><circle cx="5" cy="5" r="2.800" stroke="#a5a5a5" strokeWidth="2" /><circle cx="5" cy="5" r="4.300" stroke="#a5a5a5" strokeWidth="1.500" strokeDasharray="1.700 1.670" /></Icon>
        </button>
        <button aria-label="Lock" className="ml-auto">
          <svg width="8" height="12" viewBox="0 0 8 12" fill="none" aria-hidden="true"><path d="M2 6V2q2-3 4 0v4" stroke="#a5a5a5" /><path d="M0 5h8v7H0z" fill="#a5a5a5" /></svg>
        </button>
      </div>
      <div className="mr-[18px] flex h-[38px] shrink-0 border border-black bg-[#323232]">
        <span className="flex w-[17px] items-center justify-center border-r border-black">
          <svg width="8" height="10" viewBox="0 0 8 10" fill="none" aria-hidden="true"><path d="M.5.500h7v9h-7zM2 3h4M2 5h4M2 7h4" stroke="#aaa" /></svg>
        </span>
        <span className="h-full w-[36px] border-2 border-[#333333] border-l-[#27bfa5] bg-[#272727] shadow-[1px_0_0_#000]" />
        <span className="ml-1 self-center text-[12px] text-[#a8a8a8]">Master A - Right</span>
        <span className="ml-auto mr-[10px] h-[10px] w-[10px] self-center rounded-full bg-[#9c9c9c]" />
      </div>
      <div className="mt-auto flex h-[26px] shrink-0 items-center bg-[#363636] pl-[5px] pr-2">
        <button aria-label="Edit all layers" className="flex h-5 w-[21px] items-center justify-center bg-[#262626]">
          <Icon size={15} box={15}><path d="M.5.500h9v9h-9z" stroke="#a8a8a8" strokeWidth="1.500" /><path d="M12 3v9H3M14.500 5.500v9h-9" stroke="#888" /></Icon>
        </button>
        <span className="ml-auto flex items-center gap-[5px]">
          <Icon size={14} box={14}><path d="M0 1h14v12H0z" fill="#a8a8a8" /><circle cx="7" cy="7" r="3.500" fill="#3a3a3a" /></Icon>
          <Icon size={16} box={16}><circle cx="8" cy="8" r="7.300" stroke="#a8a8a8" /><path d="M12.500 3.500v6q-4 5-9 3z" fill="#a8a8a8" /></Icon>
          <span className="flex h-4 w-3 items-center justify-center border-y border-[#a8a8a8] text-[10px] font-bold leading-3 text-[#a8a8a8]">FX</span>
        </span>
        <span className="ml-[52px] flex items-center gap-[7px]">
          <SheetIcon stroke="#a8a8a8" lines plus />
          <TrashIcon stroke="#a8a8a8" />
        </span>
      </div>
    </section>
  );
}

function Field({ label, value }: { label: string; value: string }) {
  return (
    <label className="flex h-5 items-center gap-1 text-[#777777]">
      <span className="w-[14px] text-right">{label}</span>
      <input defaultValue={value} className="h-5 w-[65px] rounded-sm bg-[#303030] pl-[6px] text-[#929292] outline-none" />
    </label>
  );
}

function TransformPanel() {
  return (
    <section className="h-[160px] shrink-0 bg-[#363636]">
      <PanelTabs tabs={["Transform", "Navigator", "History"]} active="Transform" />
      <div className="flex pl-[17px] pt-3">
        <div className="mt-[22px]">
          <Icon size={36} box={36}><path d="M3 3h30v30H3z" fill="#686868" /><path d="M0 0h6v6H0zM15 0h6v6h-6zM30 0h6v6h-6zM0 15h6v6H0zM30 15h6v6h-6zM0 30h6v6H0zM15 30h6v6h-6zM30 30h6v6h-6z" fill="#686868" /></Icon>
        </div>
        <div className="ml-[12px]">
          <div className="flex gap-[14px]">
            <Field label="X:" value="0 mm" />
            <Field label="W:" value="0 mm" />
          </div>
          <div className="mt-1 flex gap-[14px]">
            <Field label="Y:" value="0 mm" />
            <Field label="H:" value="0 mm" />
          </div>
          <div className="mt-[10px] flex gap-[14px] text-[#777777]">
            {["R", "S"].map((name) => (
              <span key={name} className="flex items-center gap-1">
                <span className="w-[14px] text-right">{name}:</span>
                <Select label={name === "R" ? "Rotation" : "Shear"} value="0 °" className="h-5 w-[65px] bg-[#303030] text-[#a0a0a0]" />
              </span>
            ))}
          </div>
          <div className="mt-2 flex justify-end gap-px">
            <button aria-label="Scale" className="flex h-[26px] w-[30px] items-center justify-center rounded-sm bg-[#444444]">
              <Icon size={16} box={16}><path d="M1 8V1h14v14H8" stroke="#707070" strokeDasharray="4 2" /><rect y="7" width="9" height="8" rx="2" fill="#707070" /></Icon>
            </button>
            <button aria-label="Scale options" className="flex h-[26px] w-[14px] items-center justify-center rounded-sm bg-[#444444] text-gray-200">
              <ChevronDown size={10} strokeWidth={3} />
            </button>
          </div>
        </div>
        <svg width="10" height="22" viewBox="0 0 10 22" fill="none" className="ml-[10px] mt-[11px]" aria-hidden="true">
          <path d="M2.500 8V3.500q0-2 2-2h1q2 0 2 2V8M2.500 14v4.500q0 2 2 2h1q2 0 2-2V14" stroke="#9a9a9a" />
          <path d="M0 11h3M4 11h2M7 11h3" stroke="#777" />
        </svg>
      </div>
    </section>
  );
}

function SetupDialog() {
  return (
    <div role="dialog" aria-label="Document Setup" className="absolute left-[691px] top-[260px] z-10 flex w-[522px] flex-col border border-[#242424] bg-[#363636] pb-[11px]">
      <div className="relative flex h-[29px] items-center justify-center bg-[#3a3a3a] pr-[15px] pt-px text-[#dddddd]">
        Document Setup
        <button aria-label="Close" className="absolute right-2 top-2 text-[#cccccc]"><X size={13} /></button>
      </div>
      <div className="flex h-[240px] pr-[48px] pt-2">
        <div className="flex flex-1 flex-col pl-[49px]">
          {SCOPES.map((scope) => (
            <label key={scope} className="flex h-7 items-center gap-1 pb-2 text-[#a8a8a8]">
              <input
                type="radio"
                name="scope"
                defaultChecked={scope === SCOPES[0]}
                className="h-3 w-3 appearance-none rounded-full border-4 border-[#1f1f1f] bg-[#1f1f1f] checked:bg-[#cfcfcf]"
              />
              {scope}
            </label>
          ))}
          <div className="ml-[70px] mt-5 flex">
            <div className="h-[93px] w-[33px] border border-r-0 border-dashed border-[#c8c8c8]" />
            <div className="flex h-[93px] w-[33px] bg-white p-[7px]">
              <div className="flex flex-1 items-center justify-center border border-[#3c3ce8]">
                <Icon size={6} box={6}><path d="M1 1h4v4H2z" stroke="#ddd" /></Icon>
              </div>
            </div>
          </div>
        </div>
        <ul className="h-[216px] w-[208px] border border-[#acacac] bg-[#323232] text-[#97a6b8]">
          {SPREADS.map((spread) => (
            <li key={spread} className="h-6 border-b border-[#2c2c2c] bg-[#4e6b8e] pl-[2px] leading-6">{spread}</li>
          ))}
        </ul>
      </div>
      <div className="flex h-[25px] justify-center bg-[#282828] pl-px">
        {DIALOG_TABS.map((tab) => (
          <button key={tab} className={`px-[9px] pt-[2px] ${tab === "Scaling" ? "bg-[#363636] text-[#c8c8c8]" : "text-[#dcdcdc]"}`}>{tab}</button>
        ))}
      </div>
      <div className="mt-[17px] flex items-center text-[#a0a0a0]">
        <span className="w-[165px] text-right">Position:</span>
        <div className="ml-[8px] flex gap-px text-[#d6d6d6]">
          <button className="h-[18px] w-[107px] rounded-l-sm bg-[#444444]">Anchor to page</button>
          <button className="h-[18px] w-[107px] bg-[#444444]">Anchor to spread</button>
          <button className="h-[18px] w-[107px] rounded-r-sm bg-[#242424] text-white">Rescale</button>
        </div>
      </div>
      <div className="mt-[10px] flex items-center text-[#a0a0a0]">
        <span className="w-[165px] text-right">Resample:</span>
        <Select label="Resample" value="Bilinear" className="ml-[8px] h-[18px] w-[222px] bg-[#444444] text-[#ececec]" />
      </div>
      <div className="mx-1 mt-[26px] flex justify-end gap-1 border-t border-[#242424] pr-2 pt-[9px] text-[#d6d6d6]">
        <button className="h-[19px] w-[75px] rounded-sm bg-[#444444]">OK</button>
        <button className="h-[19px] w-[75px] rounded-sm bg-[#444444]">Cancel</button>
      </div>
    </div>
  );
}

function StatusBar() {
  return (
    <footer className="flex h-[28px] shrink-0 items-center border-b-[3px] border-[#1c1a1b] bg-[#333333] pt-px text-[#d6d6d6]">
      <div className="flex w-[339px] items-center pl-[7px]">
        <button aria-label="First page"><Icon size={10} box={10}><path d="M.5 0v10" stroke="#8c8c8c" /><path d="M10 0v10L2 5z" fill="#8c8c8c" /></Icon></button>
        <button aria-label="Previous page" className="ml-[9px]"><Icon size={9} box={10}><path d="M9 0v10L1 5z" fill="#8c8c8c" /></Icon></button>
        <span className="ml-[30px] w-[59px]">1 of 5</span>
        <button aria-label="Next page"><Icon size={10} box={10}><path d="M0 0v10l8-5z" fill="#dadada" /></Icon></button>
        <button aria-label="Last page" className="ml-[7px]"><Icon size={10} box={10}><path d="M9.500 0v10" stroke="#dadada" /><path d="M0 0v10l8-5z" fill="#dadada" /></Icon></button>
        <svg width="13" height="14" viewBox="0 0 13 14" fill="none" className="ml-[9px]" aria-hidden="true"><path d="M.5.500h9v12h-9zM2 3h6M2 5h6M2 7h6M2 9h6M12.500 2v11.500H3" stroke="#cfcfcf" /></svg>
        <svg width="14" height="12" viewBox="0 0 14 12" fill="none" className="ml-[7px]" aria-hidden="true"><path d="M4 1L1 3l3 2M1 3h9q3 0 3 3t-3 3M2 9q3-4 7 0-4 3-7 0z" stroke="#8c8c8c" /></svg>
        <svg width="15" height="15" viewBox="0 0 15 15" fill="none" className="ml-[12px]" aria-hidden="true">
          <path d="M11 2h2.500v12H3v-3" stroke="#bbb" />
          <circle cx="6" cy="6" r="6" fill="#35c274" />
          <path d="M3 6l2.500 2.500L9 4" stroke="#333" strokeWidth="1.300" />
        </svg>
        <span className="ml-[10px]">0 words</span>
      </div>
      <p className="text-[#a8a8a8]">
        <b className="text-white">Drag</b> to marquee select. <b className="text-white">Click</b> an object to select it.
      </p>
      <div className="absolute bottom-0 left-[784px] h-[2px] w-[49px] bg-[#4a4a4a]" />
    </footer>
  );
}

export default function App() {
  return (
    <div className="relative flex h-screen min-h-[900px] flex-col overflow-hidden bg-[#333333] font-['Open_Sans','Noto_Sans',sans-serif] text-[11px]">
      <header className="flex h-[33px] shrink-0 items-center border-b border-[#1f1f1f] bg-[#272727] pl-3">
        <div className="absolute left-[840px] top-0 h-px w-[241px] border-l-[48px] border-[#1b5c96] bg-[#e8e8e8]" />
        <PublisherLogo size={20} />
        <nav className="ml-[13px] flex items-center pt-[3px]">
          {MENUS.map((menu) => (
            <button key={menu} className="px-[13px] text-[#ececec]">{menu}</button>
          ))}
        </nav>
        <div className="ml-auto mr-[9px] flex items-center gap-5 text-[#dddddd]">
          <button aria-label="Minimise"><Icon size={10} box={10}><path d="M0 7h9" stroke="currentColor" strokeWidth="3" /></Icon></button>
          <button aria-label="Restore"><Icon size={9} box={9}><path d="M.5 3.500h5v5h-5zM.5 4.500h5M3 3V.5h5.500V6H6M3 1.500h5.500" stroke="currentColor" /></Icon></button>
          <button aria-label="Close"><X size={12} strokeWidth={2.500} /></button>
        </div>
      </header>
      <Toolbar />
      <ContextBar />
      <div className="flex min-h-0 flex-1">
        <Tools />
        <PagesPanel />
        <Canvas />
        <div className="flex w-[397px] shrink-0 flex-col border-l-[5px] border-[#303030]">
          <SwatchesPanel />
          <LayersPanel />
          <TransformPanel />
        </div>
      </div>
      <StatusBar />
      <SetupDialog />
      <Annotations />
    </div>
  );
}
